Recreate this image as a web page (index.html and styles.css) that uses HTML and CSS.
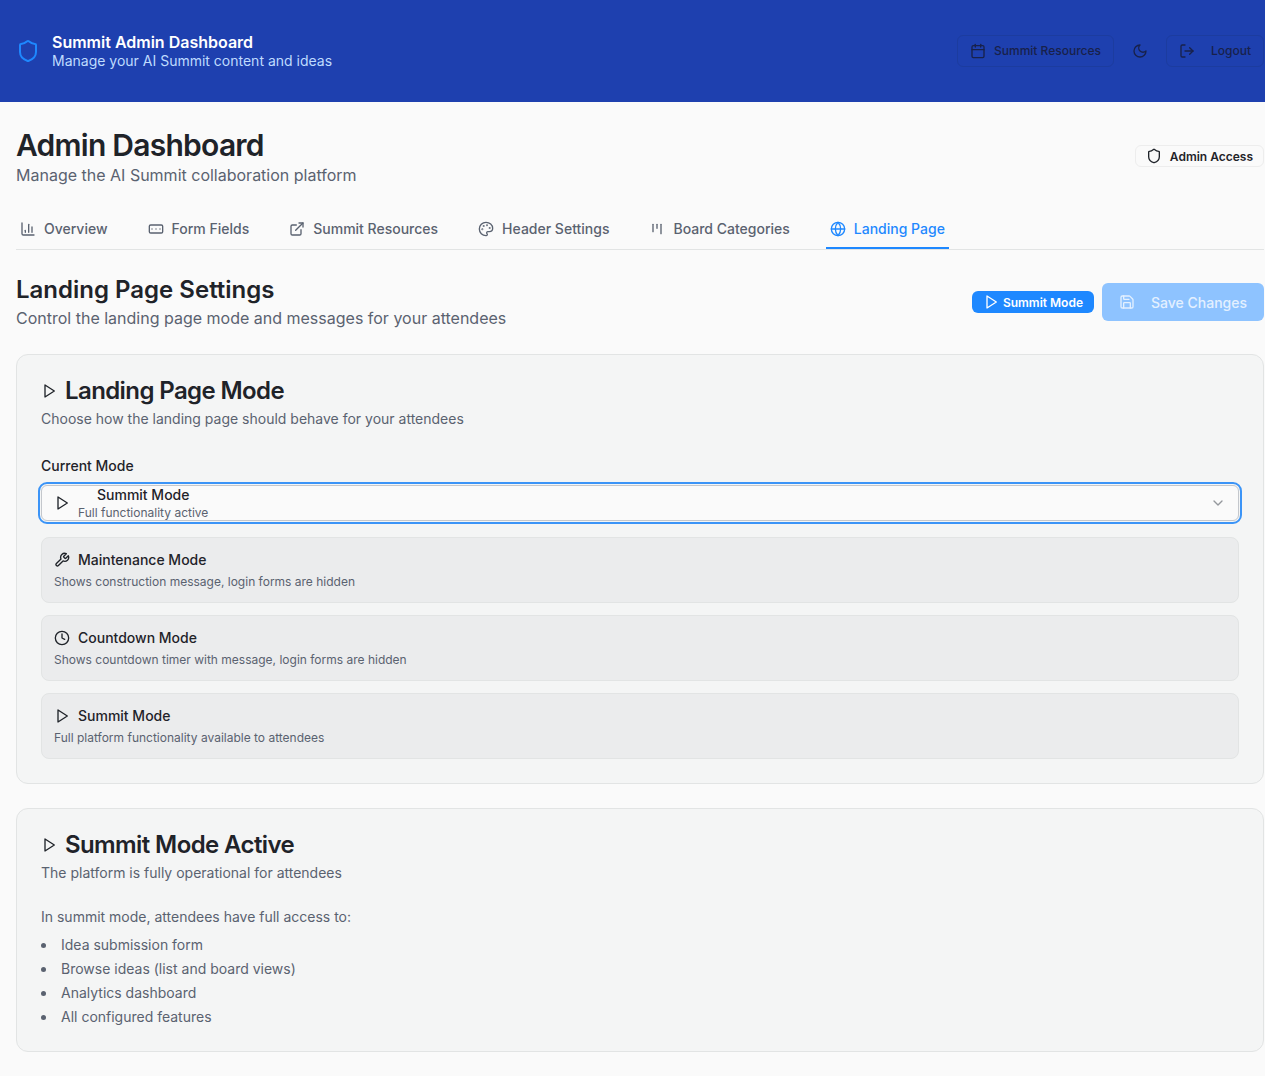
FILE: index.html
```html
<!DOCTYPE html>
<html lang="en">
<head>
  <meta charset="UTF-8" />
  <meta name="viewport" content="width=device-width, initial-scale=1.0"/>
  <title>Summit Admin Dashboard</title>
  <link rel="stylesheet" href="styles.css">
</head>
<body>
  <header class="topbar">
    <div class="brand">
      <svg class="brand-icon" viewBox="0 0 24 24"><path d="M20 13c0 5-3.5 7.5-7.66 8.95a1 1 0 0 1-.67-.01C7.5 20.5 4 18 4 13V6a1 1 0 0 1 1-1c2 0 4.5-1.2 6.24-2.72a1.17 1.17 0 0 1 1.52 0C14.51 3.81 17 5 19 5a1 1 0 0 1 1 1z"/></svg>
      <div>
        <div class="brand-title">Summit Admin Dashboard</div>
        <div class="brand-sub">Manage your AI Summit content and ideas</div>
      </div>
    </div>
    <div class="top-actions">
      <button class="top-btn res-btn">
        <svg class="icon" viewBox="0 0 24 24"><path d="M8 2v4"/><path d="M16 2v4"/><rect x="3" y="4" width="18" height="18" rx="2"/><path d="M3 10h18"/></svg>
        Summit Resources
      </button>
      <svg class="icon moon" viewBox="0 0 24 24"><path d="M12 3a6 6 0 0 0 9 9 9 9 0 1 1-9-9Z"/></svg>
      <button class="top-btn logout-btn">
        <svg class="icon" viewBox="0 0 24 24"><path d="M9 21H5a2 2 0 0 1-2-2V5a2 2 0 0 1 2-2h4"/><polyline points="16 17 21 12 16 7"/><line x1="21" y1="12" x2="9" y2="12"/></svg>
        Logout
      </button>
    </div>
  </header>

  <main class="page">
    <div class="page-head">
      <div>
        <h1>Admin Dashboard</h1>
        <p class="page-sub">Manage the AI Summit collaboration platform</p>
      </div>
      <span class="access-badge">
        <svg class="icon" viewBox="0 0 24 24"><path d="M20 13c0 5-3.5 7.5-7.66 8.95a1 1 0 0 1-.67-.01C7.5 20.5 4 18 4 13V6a1 1 0 0 1 1-1c2 0 4.5-1.2 6.24-2.72a1.17 1.17 0 0 1 1.52 0C14.51 3.81 17 5 19 5a1 1 0 0 1 1 1z"/></svg>
        Admin Access
      </span>
    </div>

    <nav class="tabs">
      <a class="tab"><svg class="icon" viewBox="0 0 24 24"><path d="M3 3v16a2 2 0 0 0 2 2h16"/><path d="M18 17V9"/><path d="M13 17V5"/><path d="M8 17v-3"/></svg>Overview</a>
      <a class="tab"><svg class="icon" viewBox="0 0 24 24"><rect x="2" y="6" width="20" height="12" rx="2"/><path d="M6 12h.01"/><path d="M12 12h.01"/><path d="M18 12h.01"/></svg>Form Fields</a>
      <a class="tab"><svg class="icon" viewBox="0 0 24 24"><path d="M15 3h6v6"/><path d="M10 14 21 3"/><path d="M18 13v6a2 2 0 0 1-2 2H5a2 2 0 0 1-2-2V8a2 2 0 0 1 2-2h6"/></svg>Summit Resources</a>
      <a class="tab"><svg class="icon" viewBox="0 0 24 24"><path d="M12 22a1 1 0 0 1 0-20 10 9 0 0 1 10 9 5 5 0 0 1-5 5h-2.25a1.75 1.75 0 0 0-1.4 2.8l.3.4a1.75 1.75 0 0 1-1.4 2.8z"/><circle cx="13.5" cy="6.5" r=".5"/><circle cx="17.5" cy="10.5" r=".5"/><circle cx="6.5" cy="12.5" r=".5"/><circle cx="8.5" cy="7.5" r=".5"/></svg>Header Settings</a>
      <a class="tab"><svg class="icon" viewBox="0 0 24 24"><path d="M6 5v11"/><path d="M12 5v6"/><path d="M18 5v14"/></svg>Board Categories</a>
      <a class="tab tab-active"><svg class="icon" viewBox="0 0 24 24"><circle cx="12" cy="12" r="10"/><path d="M12 2a14.5 14.5 0 0 0 0 20 14.5 14.5 0 0 0 0-20"/><path d="M2 12h20"/></svg>Landing Page</a>
    </nav>

    <section class="settings-head">
      <div>
        <h2>Landing Page Settings</h2>
        <p class="settings-sub">Control the landing page mode and messages for your attendees</p>
      </div>
      <div class="settings-actions">
        <span class="mode-badge"><svg class="icon" viewBox="0 0 24 24"><polygon points="6 3 20 12 6 21 6 3"/></svg>Summit Mode</span>
        <button class="save-btn"><svg class="icon" viewBox="0 0 24 24"><path d="M15.2 3a2 2 0 0 1 1.4.6l3.8 3.8a2 2 0 0 1 .6 1.4V19a2 2 0 0 1-2 2H5a2 2 0 0 1-2-2V5a2 2 0 0 1 2-2z"/><path d="M17 21v-7a1 1 0 0 0-1-1H8a1 1 0 0 0-1 1v7"/><path d="M7 3v4a1 1 0 0 0 1 1h7"/></svg>Save Changes</button>
      </div>
    </section>

    <section class="card">
      <h3 class="card-title"><svg class="icon" viewBox="0 0 24 24"><polygon points="6 3 20 12 6 21 6 3"/></svg>Landing Page Mode</h3>
      <p class="card-sub">Choose how the landing page should behave for your attendees</p>

      <div class="field-label">Current Mode</div>
      <div class="select">
        <svg class="icon select-play" viewBox="0 0 24 24"><polygon points="6 3 20 12 6 21 6 3"/></svg>
        <div class="select-text">
          <div class="select-name">Summit Mode</div>
          <div class="select-desc">Full functionality active</div>
        </div>
        <svg class="icon chevron" viewBox="0 0 24 24"><path d="m6 9 6 6 6-6"/></svg>
      </div>

      <div class="mode-list">
        <div class="mode-item">
          <div class="mode-name"><svg class="icon" viewBox="0 0 24 24"><path d="M14.7 6.3a1 1 0 0 0 0 1.4l1.6 1.6a1 1 0 0 0 1.4 0l3.77-3.77a6 6 0 0 1-7.94 7.94l-6.91 6.91a2.12 2.12 0 0 1-3-3l6.91-6.91a6 6 0 0 1 7.94-7.94l-3.76 3.76z"/></svg>Maintenance Mode</div>
          <div class="mode-desc">Shows construction message, login forms are hidden</div>
        </div>
        <div class="mode-item">
          <div class="mode-name"><svg class="icon" viewBox="0 0 24 24"><circle cx="12" cy="12" r="10"/><polyline points="12 6 12 12 16 14"/></svg>Countdown Mode</div>
          <div class="mode-desc">Shows countdown timer with message, login forms are hidden</div>
        </div>
        <div class="mode-item">
          <div class="mode-name"><svg class="icon" viewBox="0 0 24 24"><polygon points="6 3 20 12 6 21 6 3"/></svg>Summit Mode</div>
          <div class="mode-desc">Full platform functionality available to attendees</div>
        </div>
      </div>
    </section>

    <section class="card card-active">
      <h3 class="card-title"><svg class="icon" viewBox="0 0 24 24"><polygon points="6 3 20 12 6 21 6 3"/></svg>Summit Mode Active</h3>
      <p class="card-sub">The platform is fully operational for attendees</p>
      <p class="active-intro">In summit mode, attendees have full access to:</p>
      <ul class="active-list">
        <li>Idea submission form</li>
        <li>Browse ideas (list and board views)</li>
        <li>Analytics dashboard</li>
        <li>All configured features</li>
      </ul>
    </section>
  </main>
</body>
</html>
```

FILE: styles.css
```css
* {
  box-sizing: border-box;
}
body {
  margin: 0;
  font-family: Inter, "Liberation Sans", sans-serif;
  background-color: #fafafa;
  color: #1f2329;
}
h1, h2, h3, p, ul {
  margin: 0;
}
.icon {
  width: 16px;
  height: 16px;
  flex-shrink: 0;
  fill: none;
  stroke: currentColor;
  stroke-width: 2;
  stroke-linecap: round;
  stroke-linejoin: round;
}

/* top bar */
.topbar {
  height: 102px;
  padding: 0 1px 0 16px;
  background-color: #1e40af;
  display: flex;
  align-items: center;
  justify-content: space-between;
}
.brand {
  display: flex;
  align-items: center;
  gap: 12px;
}
.brand-icon {
  width: 24px;
  height: 24px;
  fill: none;
  stroke: #1e88ff;
  stroke-width: 2;
  stroke-linecap: round;
  stroke-linejoin: round;
}
.brand-title {
  color: #fff;
  font-size: 16px;
  font-weight: 600;
  line-height: 19px;
}
.brand-sub {
  color: #bfdbfe;
  font-size: 14px;
  line-height: 18px;
}
.top-actions {
  display: flex;
  align-items: center;
  margin-top: -1px;
}
.top-btn {
  height: 32px;
  display: flex;
  align-items: center;
  background: transparent;
  border: 1px solid #1c3c9f;
  border-radius: 6px;
  color: #18214a;
  font-family: inherit;
  font-size: 12px;
  font-weight: 500;
  white-space: nowrap;
}
.res-btn {
  width: 157px;
  padding: 0 12px;
  gap: 8px;
}
.moon {
  margin: 0 18px;
  color: #18214a;
}
.logout-btn {
  width: 98px;
  padding: 0 12px;
  gap: 16px;
}

/* page */
.page {
  padding: 0 1px 24px 16px;
}
.page-head {
  display: flex;
  align-items: center;
  justify-content: space-between;
  padding-top: 24px;
}
h1 {
  font-size: 30px;
  font-weight: 600;
  line-height: 38px;
  letter-spacing: -0.75px;
}
.page-sub {
  color: #5a6270;
  font-size: 16px;
  line-height: 22px;
}
.access-badge {
  height: 22px;
  padding: 0 10px;
  display: flex;
  align-items: center;
  gap: 8px;
  border: 1px solid #ededed;
  border-radius: 6px;
  background-color: #fafafa;
  font-size: 12px;
  font-weight: 600;
}

/* tabs */
.tabs {
  margin-top: 22px;
  height: 42px;
  display: flex;
  gap: 32px;
  border-bottom: 1px solid #e2e4e4;
}
.tab {
  height: 41px;
  padding: 2px 4px 0;
  display: flex;
  align-items: center;
  gap: 8px;
  border-bottom: 2px solid transparent;
  color: #5a6270;
  font-size: 14px;
  font-weight: 500;
}
.tab-active {
  color: #1e88ff;
  border-bottom-color: #1e88ff;
}

/* settings heading */
.settings-head {
  margin-top: 24px;
  display: flex;
  justify-content: space-between;
  align-items: flex-start;
}
h2 {
  font-size: 24px;
  font-weight: 600;
  line-height: 32px;
}
.settings-sub {
  color: #5a6270;
  font-size: 16px;
  line-height: 24px;
}
.settings-actions {
  display: flex;
  align-items: center;
  gap: 8px;
  margin-top: 9px;
}
.mode-badge {
  height: 22px;
  padding: 0 11px;
  display: flex;
  align-items: center;
  gap: 4px;
  background-color: #1e88ff;
  border-radius: 6px;
  color: #fff;
  font-size: 12px;
  font-weight: 600;
}
.save-btn {
  height: 38px;
  width: 162px;
  padding: 0 17px;
  display: flex;
  align-items: center;
  gap: 16px;
  background-color: #8ec3ff;
  border: none;
  border-radius: 6px;
  color: #e3f0ff;
  font-family: inherit;
  font-size: 14px;
  font-weight: 500;
  white-space: nowrap;
}

/* cards */
.card {
  margin-top: 24px;
  padding: 24px;
  background-color: #f4f5f5;
  border: 1px solid #e2e4e4;
  border-radius: 12px;
}
.card-active {
  height: 244px;
}
.card-title {
  display: flex;
  align-items: center;
  gap: 8px;
  font-size: 24px;
  font-weight: 600;
  line-height: 24px;
  letter-spacing: -0.6px;
}
.card-sub {
  margin-top: 6px;
  color: #5a6270;
  font-size: 14px;
  line-height: 20px;
}
.field-label {
  margin-top: 30px;
  font-size: 14px;
  font-weight: 500;
  line-height: 14px;
}
.select {
  margin-top: 12px;
  height: 36px;
  padding: 0 12px;
  display: flex;
  align-items: center;
  background-color: #fafafa;
  border: 1px solid #c4c7cc;
  border-radius: 6px;
  outline: 2px solid #3b94f7;
  outline-offset: 1px;
}
.select-play {
  margin-right: 8px;
}
.select-text {
  flex: 1;
}
.select-name {
  padding-left: 19px;
  font-size: 14px;
  font-weight: 500;
  line-height: 16px;
  margin-top: 1px;
}
.select-desc {
  color: #5a6270;
  font-size: 12px;
  line-height: 16px;
  margin-top: 2px;
}
.chevron {
  color: #94979c;
}
.mode-list {
  margin-top: 16px;
  display: flex;
  flex-direction: column;
  gap: 12px;
}
.mode-item {
  height: 66px;
  padding: 12px;
  background-color: #ebeced;
  border: 1px solid #e2e4e4;
  border-radius: 8px;
}
.mode-name {
  display: flex;
  align-items: center;
  gap: 8px;
  font-size: 14px;
  font-weight: 500;
  line-height: 20px;
}
.mode-desc {
  margin-top: 4px;
  color: #5a6270;
  font-size: 12px;
  line-height: 16px;
}
.active-intro {
  margin-top: 24px;
  color: #5a6270;
  font-size: 14px;
  line-height: 20px;
}
.active-list {
  margin-top: 8px;
  padding-left: 20px;
  color: #5a6270;
  font-size: 14px;
  line-height: 20px;
  list-style: none;
}
.active-list li {
  position: relative;
  margin-bottom: 4px;
}
.active-list li::before {
  content: "";
  position: absolute;
  left: -20px;
  top: 8px;
  width: 5px;
  height: 5px;
  border-radius: 50%;
  background-color: #5a6270;
}
```
